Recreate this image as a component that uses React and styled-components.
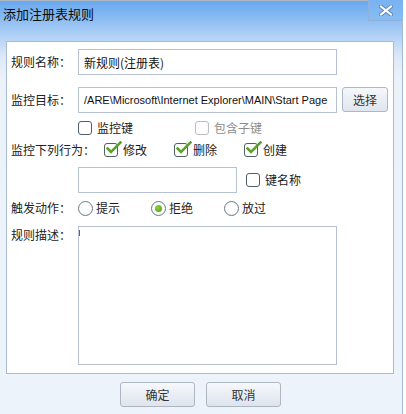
import React from 'react';
import styled, { createGlobalStyle } from 'styled-components';

const Global = createGlobalStyle`
  html, body { margin: 0; padding: 0; background: #ffffff; }
  body { font-family: "Noto Sans CJK SC", "Liberation Sans", sans-serif; font-size: 12px; color: #1a1a1a; }
`;

const Window = styled.div`
  position: relative;
  width: 403px;
  height: 414px;
  box-sizing: border-box;
  border-top: 1px solid #aeb8c4;
  border-right: 1px solid #a3bad8;
  background: linear-gradient(#68a8ef 0px, #8bbcf2 18px, #bcd7f6 40px, #dde9f8 56px, #ecf2fa 80px, #edf3fb 100%);
  padding: 0 8px 0 6px;
  display: flex;
  flex-direction: column;
`;

const TitleBar = styled.div`
  height: 40px;
  display: flex;
  align-items: flex-start;
  padding-top: 4px;
  box-sizing: border-box;
  margin-left: -3px;
`;

const Title = styled.span`
  font-size: 13px;
  line-height: 18px;
  color: #0b0b0b;
`;

const CloseBox = styled.div`
  position: absolute;
  top: -1px;
  right: -1px;
  width: 35px;
  height: 21px;
  box-sizing: border-box;
  border-left: 1px solid #8fb2dc;
  border-bottom: 1px solid #8fb2dc;
  background: linear-gradient(#78b2f1, #88bcf3);
  display: flex;
  align-items: center;
  justify-content: center;
`;

const Panel = styled.div`
  background: #ffffff;
  border: 1px solid #a9bad3;
  height: 333px;
  box-sizing: border-box;
  padding: 7px 0 0 4px;
  display: flex;
  flex-direction: column;
`;

const Row = styled.div`
  display: flex;
  align-items: ${p => (p.$top ? 'flex-start' : 'center')};
  height: ${p => p.$h}px;
  margin-top: ${p => p.$mt || 0}px;
`;

const Label = styled.span`
  width: ${p => (p.$w ? `${p.$w}px` : 'auto')};
  flex-shrink: 0;
  line-height: 18px;
  color: #222;
  white-space: nowrap;
`;

const TextBox = styled.div`
  width: ${p => p.$w}px;
  height: ${p => p.$h}px;
  box-sizing: border-box;
  border: 1px solid #b6c2d4;
  background: #fff;
  padding: 0 5px;
  display: flex;
  align-items: ${p => (p.$top ? 'flex-start' : 'center')};
  white-space: nowrap;
  overflow: hidden;
  color: #111;
`;

const PathText = styled.span`
  font-family: "Liberation Sans", "DejaVu Sans", sans-serif;
  font-size: 11px;
  color: #111;
`;

const Caret = styled.span`
  width: 1px;
  height: 6px;
  margin-top: 3px;
  margin-left: -5px;
  background: #a0522d;
`;

const PickButton = styled.button`
  margin-left: 5px;
  width: 46px;
  height: 25px;
  border: 1px solid #adb7c6;
  border-radius: 3px;
  background: linear-gradient(#f5f7fb, #dfe6ef);
  font-family: inherit;
  font-size: 12px;
  color: #333;
  padding: 0;
  align-self: flex-start;
`;

const Item = styled.label`
  display: flex;
  align-items: center;
  width: ${p => (p.$w ? `${p.$w}px` : 'auto')};
  flex-shrink: 0;
  margin-left: ${p => p.$ml || 0}px;
  color: ${p => (p.$disabled ? '#8c8c8c' : '#1a1a1a')};
  gap: ${p => p.$gap || 5}px;
  line-height: 18px;
`;

const Box = styled.span`
  position: relative;
  width: 14px;
  height: 14px;
  box-sizing: border-box;
  border: 1px solid ${p => (p.$disabled ? '#b9bec4' : '#4f5e6c')};
  border-radius: 3px;
  background: #fff;
  flex-shrink: 0;
`;

const Tick = styled.svg`
  position: absolute;
  left: 1px;
  top: -3px;
`;

const Radio = styled.span`
  width: 15px;
  height: 15px;
  box-sizing: border-box;
  border: 1px solid #6d7a88;
  border-radius: 50%;
  background: radial-gradient(circle at 50% 40%, #ffffff 55%, #e4e8ee 100%);
  display: flex;
  align-items: center;
  justify-content: center;
  flex-shrink: 0;
`;

const Dot = styled.span`
  width: 7px;
  height: 7px;
  border-radius: 50%;
  background: radial-gradient(circle at 40% 35%, #8fd33a, #4f9a12);
`;

const Footer = styled.div`
  display: flex;
  justify-content: flex-start;
  gap: 11px;
  padding: 8px 0 0 114px;
`;

const DlgButton = styled.button`
  width: 75px;
  height: 25px;
  border: 1px solid #aeb6c2;
  border-radius: 3px;
  background: linear-gradient(#f6f8fb, #dde4ee);
  font-family: inherit;
  font-size: 12px;
  color: #333;
  padding: 0;
`;

const Check = ({ checked, disabled }) => (
  <Box $disabled={disabled}>
    {checked && (
      <Tick width="16" height="14" viewBox="0 0 16 14">
        <path d="M1.5 7.5 L5 11 L14.5 1.5" fill="none" stroke="#5aa325" strokeWidth="2.6" strokeLinecap="square" />
      </Tick>
    )}
  </Box>
);

const Option = ({ selected, children, ml }) => (
  <Item $ml={ml} $w={73} $gap={3}>
    <Radio>{selected && <Dot />}</Radio>
    {children}
  </Item>
);

export default function App() {
  return (
    <>
      <Global />
      <Window>
        <TitleBar>
          <Title>添加注册表规则</Title>
        </TitleBar>
        <CloseBox>
          <svg width="14" height="11" viewBox="0 0 14 11">
            <path d="M2 1.5 L12 9.5 M12 1.5 L2 9.5" stroke="#5d86b8" strokeWidth="4" strokeLinecap="square" />
            <path d="M2 1.5 L12 9.5 M12 1.5 L2 9.5" stroke="#ffffff" strokeWidth="2" strokeLinecap="square" />
          </svg>
        </CloseBox>
        <Panel>
          <Row $h={26}>
            <Label $w={67}>规则名称：</Label>
            <TextBox $w={259} $h={26}>新规则(注册表)</TextBox>
          </Row>
          <Row $h={26} $mt={12}>
            <Label $w={67}>监控目标：</Label>
            <TextBox $w={259} $h={26}>
              <PathText>/ARE\Microsoft\Internet Explorer\MAIN\Start Page</PathText>
            </TextBox>
            <PickButton>选择</PickButton>
          </Row>
          <Row $h={18} $mt={6}>
            <Label $w={67} />
            <Item $w={117}>
              <Check />
              监控键
            </Item>
            <Item $disabled>
              <Check disabled />
              包含子键
            </Item>
          </Row>
          <Row $h={18} $mt={4}>
            <Label $w={93}>监控下列行为：</Label>
            <Item $w={70}>
              <Check checked />
              修改
            </Item>
            <Item $w={70}>
              <Check checked />
              删除
            </Item>
            <Item $w={70}>
              <Check checked />
              创建
            </Item>
          </Row>
          <Row $h={26} $mt={8}>
            <Label $w={67} />
            <TextBox $w={159} $h={26} />
            <Item $ml={9}>
              <Check />
              键名称
            </Item>
          </Row>
          <Row $h={18} $mt={6}>
            <Label $w={67}>触发动作：</Label>
            <Option>提示</Option>
            <Option selected>拒绝</Option>
            <Option>放过</Option>
          </Row>
          <Row $h={139} $mt={9} $top>
            <Label $w={67}>规则描述：</Label>
            <TextBox $w={259} $h={139} $top>
              <Caret />
            </TextBox>
          </Row>
        </Panel>
        <Footer>
          <DlgButton>确定</DlgButton>
          <DlgButton>取消</DlgButton>
        </Footer>
      </Window>
    </>
  );
}
